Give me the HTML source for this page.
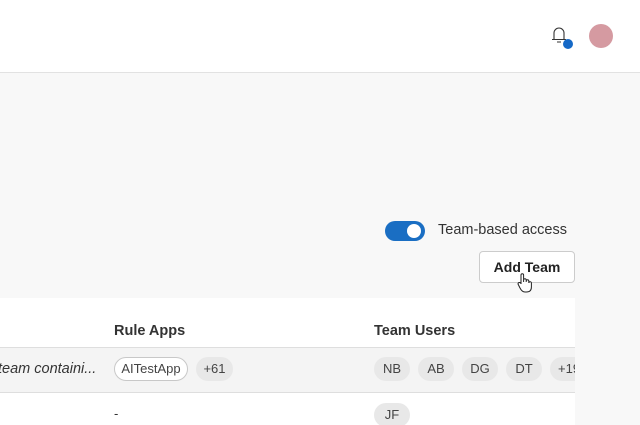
<!DOCTYPE html>
<html><head><style>
*{margin:0;padding:0;box-sizing:border-box}
body{width:640px;height:425px;overflow:hidden;background:#f8f8f8;font-family:"Liberation Sans",sans-serif;position:relative;color:#222}
.hdr{position:absolute;left:0;top:0;width:640px;height:73px;background:#fff;border-bottom:1px solid #e2e2e2}
.av{position:absolute;left:589px;top:24px;width:24px;height:24px;border-radius:50%;background:#d59aa1}
.dot{position:absolute;left:563px;top:39px;width:10px;height:10px;border-radius:50%;background:#1569c7}
.tog{position:absolute;left:385px;top:221px;width:40px;height:20px;border-radius:10px;background:#1a6ec3}
.tog:after{content:"";position:absolute;right:4px;top:3px;width:14px;height:14px;border-radius:50%;background:#fff}
.lbl{position:absolute;left:438px;top:222px;font-size:14.5px;color:#333}
.btn{position:absolute;left:479px;top:251px;width:96px;height:32px;border:1px solid #ccc;border-radius:4px;background:#fff;font-size:14px;font-weight:bold;text-align:center;line-height:30px;color:#222}
.tbl{position:absolute;left:0;top:298px;width:575px;height:127px;background:#fff;overflow:hidden}
.th{position:absolute;top:25px;font-size:14.5px;font-weight:bold;color:#333}
.r1{position:absolute;left:0;top:49px;width:575px;height:46px;background:#f4f4f4;border-top:1px solid #dedede;border-bottom:1px solid #dedede}
.t{position:absolute;font-size:13px;color:#333;white-space:nowrap}
.chip{position:absolute;height:24px;border-radius:12px;background:#e8e8e8;font-size:13px;line-height:24px;text-align:center;color:#444}
</style></head><body>
<div class="hdr">
<svg style="position:absolute;left:551px;top:26px" width="16" height="18" viewBox="0 0 16 18"><path d="M3 13 V7 a5 5 0 0 1 10 0 V13 M1 13.5 H15 M6 16 h4" fill="none" stroke="#333" stroke-width="1.1"/></svg>
<div class="dot"></div>
<div class="av"></div>
</div>
<div class="tog"></div>
<div class="lbl">Team-based access</div>
<div class="btn">Add Team</div>
<svg style="position:absolute;left:516px;top:272px" width="18" height="22" viewBox="0 0 18 22"><path d="M5 12 V3 a1.3 1.3 0 0 1 2.6 0 V10 V8 a1.3 1.3 0 0 1 2.6 0 V10 V9 a1.3 1.3 0 0 1 2.6 0 V11 a1.3 1.3 0 0 1 2.6 0 V15 q0 5 -5 5 H9 q-3 0 -5 -4 L2 12 a1.3 1.3 0 0 1 3 0 Z" fill="#fff" stroke="#222" stroke-width="1"/></svg>
<div class="tbl">
<div class="th" style="left:114px">Rule Apps</div>
<div class="th" style="left:374px">Team Users</div>
<div class="r1"></div>
<div class="t" style="left:-2px;top:63px;font-style:italic;font-size:14.5px">team containi...</div>
<div class="chip" style="left:114px;top:59px;width:74px;background:#fff;border:1px solid #c8c8c8;line-height:22px">AITestApp</div>
<div class="chip" style="left:196px;top:59px;width:37px">+61</div>
<div class="chip" style="left:374px;top:59px;width:36px">NB</div>
<div class="chip" style="left:418px;top:59px;width:36px">AB</div>
<div class="chip" style="left:462px;top:59px;width:36px">DG</div>
<div class="chip" style="left:506px;top:59px;width:36px">DT</div>
<div class="chip" style="left:550px;top:59px;width:36px;text-align:left;padding-left:8px">+19</div>
<div class="t" style="left:114px;top:108px">-</div>
<div class="chip" style="left:374px;top:105px;width:36px">JF</div>
</div>
</body></html>
